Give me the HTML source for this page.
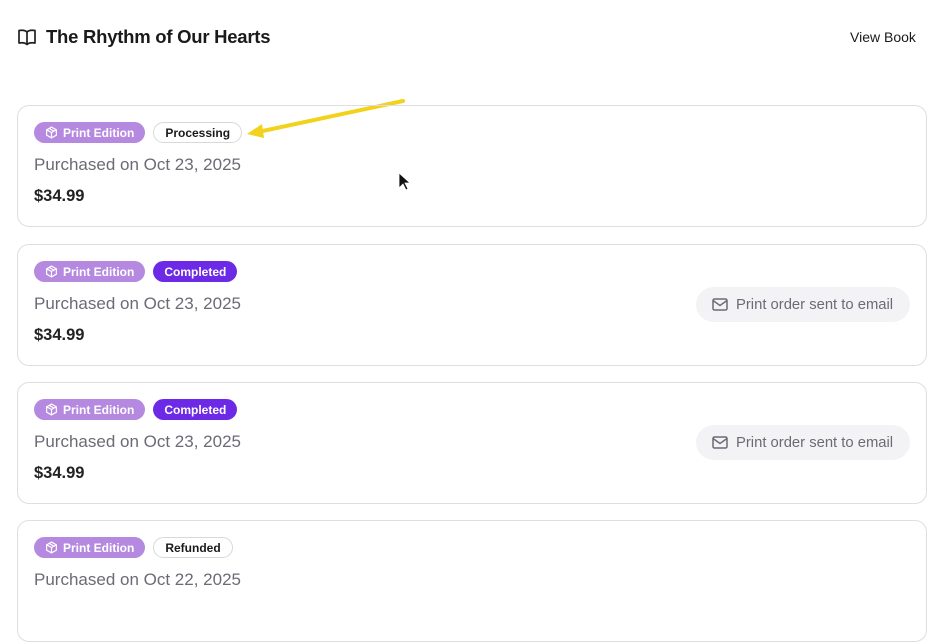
<!DOCTYPE html>
<html><head><style>
body{margin:0;width:934px;height:603px;overflow:hidden;background:#fff;font-family:"Liberation Sans",sans-serif;position:relative}
.hdr{position:absolute;top:26px;left:17px;display:flex;align-items:center;gap:9px}
.title{font-weight:700;font-size:18.5px;color:#1a1a1a;letter-spacing:-0.25px}
.vb{position:absolute;top:29px;left:850px;font-size:14px;color:#1a1a1a}
.card{position:absolute;left:17px;width:908px;height:120px;border:1px solid #dedee2;border-radius:12px;box-sizing:content-box}
.badges{position:absolute;top:16px;left:16px;display:flex;gap:8px}
.b{height:21px;box-sizing:border-box;border-radius:11px;font-size:12px;font-weight:700;display:flex;align-items:center;padding:0 11px}
.pe{background:#b589e0;color:#fff;padding-left:11px;gap:5px}
.pr{border:1px solid #d8d8dc;color:#1a1a1a}
.co{background:#6d2ae6;color:#fff}
.date{position:absolute;top:49px;left:16px;font-size:17px;color:#6b6b75}
.price{position:absolute;top:81px;left:16px;font-size:16.5px;font-weight:700;color:#222}
.em{position:absolute;top:42px;right:16px;width:214px;height:35px;border-radius:18px;background:#f3f3f5;color:#6b6b75;font-size:14.8px;display:flex;align-items:center;gap:8px;box-sizing:border-box;padding-left:16px}
</style></head><body>
<div class="hdr"><svg width="20" height="18" viewBox="0 0 20 18" fill="none" stroke="#222" stroke-width="1.7" stroke-linejoin="round"><path d="M10 4C8 2 5 2 2 2.5V15C5 14.5 8 14.5 10 16.5C12 14.5 15 14.5 18 15V2.5C15 2 12 2 10 4Z"/><path d="M10 4V16.5"/></svg><span class="title">The Rhythm of Our Hearts</span></div>
<div class="vb">View Book</div>
<svg style="position:absolute;left:0;top:0" width="934" height="603"><line x1="403" y1="101" x2="258" y2="132" stroke="#f2d21b" stroke-width="4" stroke-linecap="round"/><path d="M247 134L262 124L264 138Z" fill="#f2d21b"/><path d="M399 173L399 188L403 184L406 190L408 189L405 183L410 183Z" fill="#111" stroke="#fff" stroke-width="0.8"/></svg>
<div class="card" style="top:105px"><div class="badges"><div class="b pe"><svg width="13" height="13" viewBox="0 0 24 24" fill="none" stroke="#fff" stroke-width="2.2"><path d="M12 2L21 7V17L12 22L3 17V7Z"/><path d="M3 7L12 12L21 7M12 12V22M7.5 4.5L16.5 9.5"/></svg>Print Edition</div><div class="b pr">Processing</div></div><div class="date">Purchased on Oct 23, 2025</div><div class="price">$34.99</div></div>
<div class="card" style="top:244px"><div class="badges"><div class="b pe"><svg width="13" height="13" viewBox="0 0 24 24" fill="none" stroke="#fff" stroke-width="2.2"><path d="M12 2L21 7V17L12 22L3 17V7Z"/><path d="M3 7L12 12L21 7M12 12V22M7.5 4.5L16.5 9.5"/></svg>Print Edition</div><div class="b co">Completed</div></div><div class="date">Purchased on Oct 23, 2025</div><div class="price">$34.99</div><div class="em"><svg width="16" height="13" viewBox="0 0 16 13" fill="none" stroke="#6b6b75" stroke-width="1.5"><rect x="1" y="1" width="14" height="11" rx="1.5"/><path d="M1 2.5L8 7.5L15 2.5"/></svg>Print order sent to email</div></div>
<div class="card" style="top:382px"><div class="badges"><div class="b pe"><svg width="13" height="13" viewBox="0 0 24 24" fill="none" stroke="#fff" stroke-width="2.2"><path d="M12 2L21 7V17L12 22L3 17V7Z"/><path d="M3 7L12 12L21 7M12 12V22M7.5 4.5L16.5 9.5"/></svg>Print Edition</div><div class="b co">Completed</div></div><div class="date">Purchased on Oct 23, 2025</div><div class="price">$34.99</div><div class="em"><svg width="16" height="13" viewBox="0 0 16 13" fill="none" stroke="#6b6b75" stroke-width="1.5"><rect x="1" y="1" width="14" height="11" rx="1.5"/><path d="M1 2.5L8 7.5L15 2.5"/></svg>Print order sent to email</div></div>
<div class="card" style="top:520px"><div class="badges"><div class="b pe"><svg width="13" height="13" viewBox="0 0 24 24" fill="none" stroke="#fff" stroke-width="2.2"><path d="M12 2L21 7V17L12 22L3 17V7Z"/><path d="M3 7L12 12L21 7M12 12V22M7.5 4.5L16.5 9.5"/></svg>Print Edition</div><div class="b pr">Refunded</div></div><div class="date">Purchased on Oct 22, 2025</div></div>
</body></html>
